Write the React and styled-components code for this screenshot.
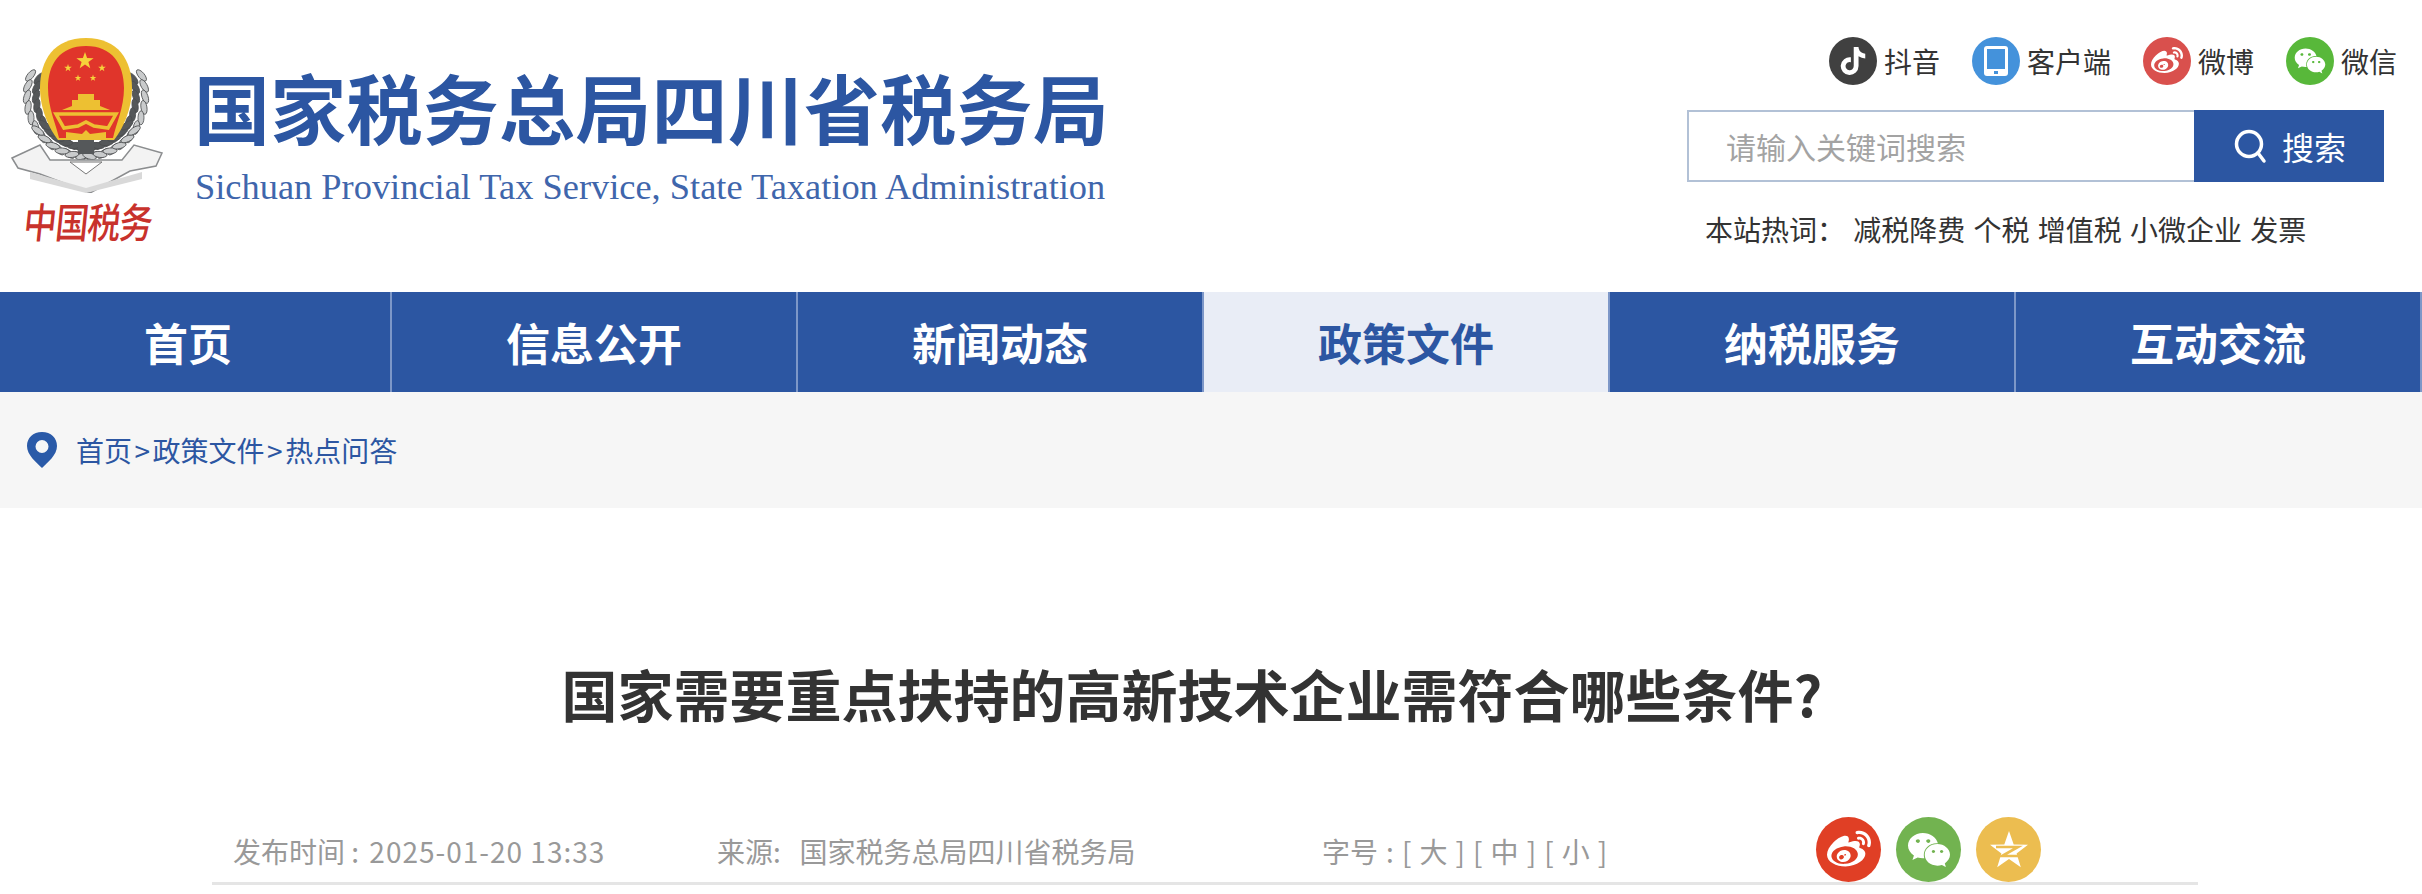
import React from 'react';
import styled, {createGlobalStyle} from 'styled-components';
import {FaTiktok, FaWeibo, FaWeixin} from 'react-icons/fa';

const BLUE = '#2c56a2';
const CJK = '"Noto Sans CJK SC", "Noto Sans", sans-serif';

const GlobalStyle = createGlobalStyle`
  html, body {
    margin: 0;
    background: #fff;
    overflow: hidden;
    font-family: ${CJK};
  }
`;

const Page = styled.div`
  width: 2422px;
  height: 894px;
  overflow: hidden;
`;

const Header = styled.header`
  height: 292px;
  display: flex;
  justify-content: space-between;
`;

const Brand = styled.div`
  display: flex;
  padding: 38px 0 0 10px;
`;

const EmblemColumn = styled.div`
  width: 155px;
  display: flex;
  flex-direction: column;
  align-items: center;
`;

const SealText = styled.div`
  font-size: 33px;
  line-height: 48px;
  margin-top: 3px;
  color: #c8322c;
  font-weight: 500;
  letter-spacing: -1px;
  white-space: nowrap;
  transform: skewX(-6deg) scaleY(1.25);
`;

const BrandText = styled.div`
  margin: 26px 0 0 29px;
`;

const BrandName = styled.div`
  font-size: 76px;
  line-height: 84px;
  font-weight: 700;
  letter-spacing: 0.25px;
  color: ${BLUE};
  white-space: nowrap;
`;

const BrandEnglish = styled.div`
  font-family: "Liberation Serif", serif;
  font-size: 36.4px;
  line-height: 42px;
  margin: 18px 0 0 1px;
  color: #3f66ac;
  white-space: nowrap;
`;

const Tools = styled.div`
  width: 735px;
  display: flex;
  flex-direction: column;
`;

const Channels = styled.div`
  height: 110px;
  padding: 37px 25px 0 0;
  box-sizing: border-box;
  display: flex;
  justify-content: flex-end;
  gap: 32px;
`;

const Channel = styled.a`
  display: flex;
  align-items: flex-start;
  gap: 7px;
  font-size: 28px;
  line-height: 48px;
  color: #333;
`;

const Round = styled.span`
  width: ${p => p.$size}px;
  height: ${p => p.$size}px;
  border-radius: 50%;
  background: ${p => p.$bg};
  color: #fff;
  display: flex;
  align-items: center;
  justify-content: center;
  flex: none;
  font-size: ${p => p.$icon}px;
`;

const SearchBar = styled.form`
  display: flex;
  height: 72px;
  width: 697px;
  margin: 0;
`;

const SearchInput = styled.div`
  flex: 1;
  box-sizing: border-box;
  border: 2px solid #b2c1d6;
  border-right: none;
  padding-left: 37px;
  font-size: 30px;
  line-height: 68px;
  color: #a3a3a3;
`;

const SearchButton = styled.button`
  width: 190px;
  border: none;
  padding: 0;
  background: ${BLUE};
  color: #fff;
  font-family: ${CJK};
  font-size: 32px;
  display: flex;
  align-items: center;
  justify-content: center;
  gap: 14px;
`;

const HotWords = styled.div`
  margin: 27px 0 0 18px;
  font-size: 28px;
  line-height: 40px;
  word-spacing: 2px;
  color: #333;
  white-space: pre;
`;

const Nav = styled.nav`
  display: flex;
  height: 100px;
  margin-left: -14px;
  width: 2436px;
`;

const NavItem = styled.a`
  width: 406px;
  box-sizing: border-box;
  border-right: 2px solid #7d97c8;
  background: ${p => (p.$active ? '#e9edf6' : BLUE)};
  color: ${p => (p.$active ? BLUE : '#fff')};
  font-size: 44px;
  font-weight: 700;
  line-height: 100px;
  text-align: center;
`;

const Crumbs = styled.div`
  height: 116px;
  background: #f6f6f6;
  display: flex;
  align-items: center;
  padding-left: 26px;
  gap: 18px;
  font-size: 28px;
  color: ${BLUE};
`;

const Sep = styled.span`
  margin: 0 2.5px;
`;

const Article = styled.article`
  width: 1986px;
  margin-left: 212px;
`;

const Title = styled.h1`
  margin: 0;
  padding: 144px 26px 0 0;
  font-size: 56px;
  line-height: 82px;
  font-weight: 700;
  color: #333;
  text-align: center;
`;

const Meta = styled.div`
  margin-top: 83px;
  height: 68px;
  box-sizing: border-box;
  padding-left: 21px;
  border-bottom: 3px solid #e5e5e5;
  display: flex;
  font-size: 28px;
  line-height: 68px;
  color: #999;
`;

const MetaItem = styled.span`
  width: ${p => p.$width}px;
  flex: none;
  white-space: pre;
  word-spacing: ${p => p.$wordGap || 0}px;
`;

const Digits = styled.span`
  margin-left: 4px;
  letter-spacing: 1px;
`;

const Share = styled.div`
  display: flex;
  gap: 15px;
`;

const star = (cx, cy, r) => {
  const pts = [];
  for (let i = 0; i < 10; i++) {
    const a = -Math.PI / 2 + (i * Math.PI) / 5;
    const d = i % 2 ? r * 0.4 : r;
    pts.push(`${(cx + d * Math.cos(a)).toFixed(1)},${(cy + d * Math.sin(a)).toFixed(1)}`);
  }
  return pts.join(' ');
};

// wheat leaves running down both sides of the emblem
const leaves = [];
for (let i = 0; i < 17; i++) {
  const a = (i / 16) * 165 - 20;
  [1, -1].forEach(side => {
    const rad = (a * Math.PI) / 180;
    [59, 50].forEach((r, k) => {
      const x = 76 + side * r * Math.cos(rad);
      const y = 58 + r * 1.02 * Math.sin(rad);
      leaves.push(
        <ellipse key={`${i}${side}${k}`} cx={x} cy={y} rx="7" ry="3"
          fill={k ? '#55585a' : '#c9cbcc'} stroke="#4b4d4f" strokeWidth=".8"
          transform={`rotate(${side * (a + 70)} ${x} ${y})`} />
      );
    });
  });
}

function Emblem() {
  return (
    <svg width="155" height="155" viewBox="0 0 155 155">
      {leaves}
      <path d="M2 120 L30 107 L40 122 L112 122 L124 107 L152 115 L146 128 L120 133 L80 155 L30 136 L8 130Z" fill="#f3f3f3" stroke="#8b8d8f" strokeWidth="1.5" />
      <path d="M20 134 L76 150 L132 134 L132 141 L76 155 L20 141Z" fill="#d9d9d9" />
      <path d="M60 124 L76 136 L92 124Z" fill="#fff" stroke="#777" />
      <rect x="68" y="98" width="16" height="18" fill="#55585a" />
      <path d="M76 0 C108 0 122 22 122 50 C122 72 112 92 104 102 L48 102 C40 92 30 72 30 50 C30 22 44 0 76 0Z" fill="#edc032" />
      <path d="M76 8 C102 8 114 26 114 50 C114 70 106 86 103 100 L49 100 C46 86 38 70 38 50 C38 26 50 8 76 8Z" fill="#e0352b" />
      <polygon points={star(75, 23, 9)} fill="#f6d23b" />
      <polygon points={star(58, 30, 4)} fill="#f6d23b" />
      <polygon points={star(92, 30, 4)} fill="#f6d23b" />
      <polygon points={star(68, 40, 3.5)} fill="#f6d23b" />
      <polygon points={star(83, 40, 3.5)} fill="#f6d23b" />
      <path d="M62 62 L68 62 L68 56 L84 56 L84 62 L90 62 L90 68 L100 72 L52 72 L62 68Z" fill="#edc032" />
      <path d="M46 76 L106 76 L98 90 L84 88 L76 84 L68 88 L54 90Z" fill="none" stroke="#edc032" strokeWidth="3.5" />
      <path d="M56 94 L72 96 L76 92 L80 96 L96 94 L96 102 L56 102Z" fill="#edc032" />
    </svg>
  );
}

function TabletIcon() {
  return (
    <svg width="26" height="32" viewBox="0 0 26 32">
      <rect x="1" y="1" width="24" height="30" rx="3" fill="#fff" />
      <rect x="4" y="4" width="18" height="20" fill="#4492db" />
      <rect x="11" y="26" width="4" height="3" fill="#4492db" />
    </svg>
  );
}

function ZoneStar() {
  return (
    <svg width="40" height="40" viewBox="0 0 40 40">
      <polygon points={star(20, 21, 20)} fill="#fff" />
      <path d="M7 17 H29 L13 26 H33" fill="none" stroke="#ecbd50" strokeWidth="2.6" />
    </svg>
  );
}

function SearchGlyph() {
  return (
    <svg width="36" height="36" viewBox="0 0 36 36" fill="none" stroke="#fff" strokeWidth="3.5">
      <circle cx="17" cy="16" r="12.5" />
      <path d="M26 25 L32 33" strokeLinecap="round" />
    </svg>
  );
}

function Pin() {
  return (
    <svg width="32" height="36" viewBox="0 0 32 36">
      <path fillRule="evenodd" d="M16 0 C25 0 31 6 31 14 C31 23 22 30 16 36 C10 30 1 23 1 14 C1 6 7 0 16 0Z M16 8 A6.5 6.5 0 1 0 16 21 A6.5 6.5 0 1 0 16 8Z" fill="#2a5aa8" />
    </svg>
  );
}

const channels = [
  {name: '抖音', bg: '#404040', icon: <FaTiktok />, size: 28},
  {name: '客户端', bg: '#4492db', icon: <TabletIcon />, size: 28},
  {name: '微博', bg: '#d9504d', icon: <FaWeibo />, size: 32},
  {name: '微信', bg: '#58b83a', icon: <FaWeixin />, size: 32},
];

const navs = ['首页', '信息公开', '新闻动态', '政策文件', '纳税服务', '互动交流'];

function App() {
  return (
    <Page>
      <GlobalStyle />
      <Header>
        <Brand>
          <EmblemColumn>
            <Emblem />
            <SealText>中国税务</SealText>
          </EmblemColumn>
          <BrandText>
            <BrandName>国家税务总局四川省税务局</BrandName>
            <BrandEnglish>Sichuan Provincial Tax Service, State Taxation Administration</BrandEnglish>
          </BrandText>
        </Brand>
        <Tools>
          <Channels>
            {channels.map(c => (
              <Channel key={c.name}>
                <Round $size={48} $bg={c.bg} $icon={c.size}>{c.icon}</Round>
                {c.name}
              </Channel>
            ))}
          </Channels>
          <SearchBar>
            <SearchInput>请输入关键词搜索</SearchInput>
            <SearchButton type="button"><SearchGlyph />搜索</SearchButton>
          </SearchBar>
          <HotWords>本站热词： 减税降费 个税 增值税 小微企业 发票</HotWords>
        </Tools>
      </Header>
      <Nav>
        {navs.map(n => (
          <NavItem key={n} $active={n === '政策文件'}>{n}</NavItem>
        ))}
      </Nav>
      <Crumbs>
        <Pin />
        <span>首页<Sep>&gt;</Sep>政策文件<Sep>&gt;</Sep>热点问答</span>
      </Crumbs>
      <Article>
        <Title>国家需要重点扶持的高新技术企业需符合哪些条件?</Title>
        <Meta>
          <MetaItem $width={484}>发布时间 : <Digits>2025-01-20 13:33</Digits></MetaItem>
          <MetaItem $width={605}>来源:   国家税务总局四川省税务局</MetaItem>
          <MetaItem $width={494} $wordGap={1.8}>字号 : [ 大 ] [ 中 ] [ 小 ]</MetaItem>
          <Share>
            <Round $size={65} $bg="#e03f25" $icon={44}><FaWeibo /></Round>
            <Round $size={65} $bg="#72b350" $icon={44}><FaWeixin /></Round>
            <Round $size={65} $bg="#ecbd50" $icon={44}><ZoneStar /></Round>
          </Share>
        </Meta>
      </Article>
    </Page>
  );
}

export default App;
